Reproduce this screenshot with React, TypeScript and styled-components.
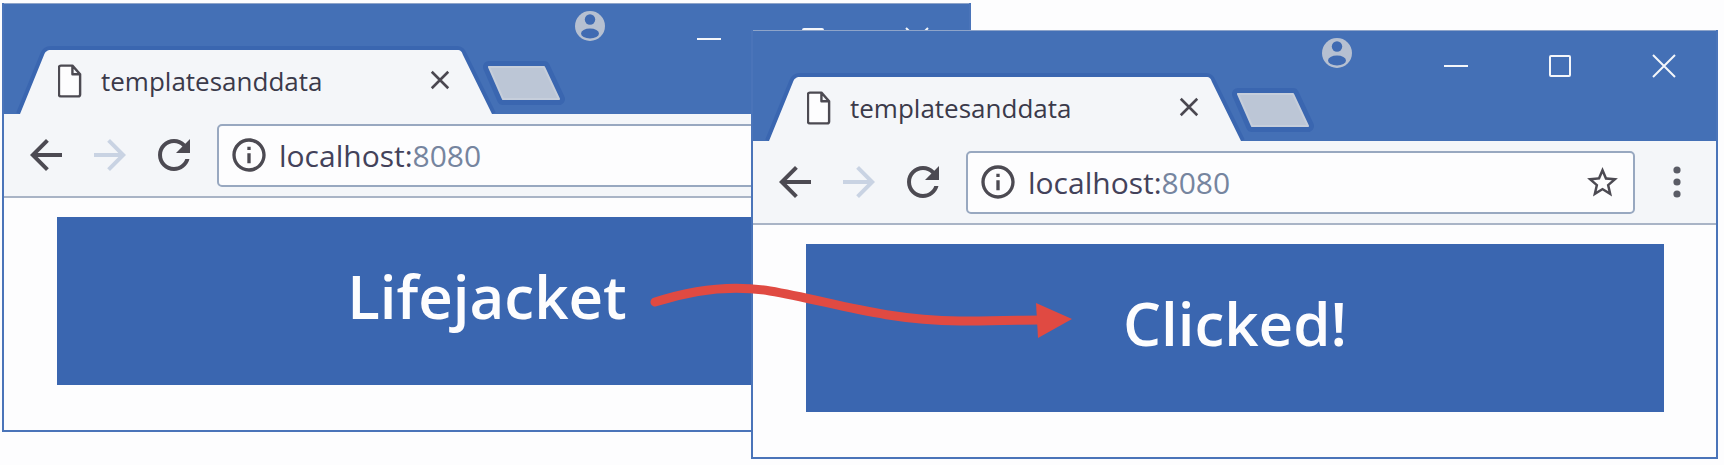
import { createGlobalStyle, styled } from "styled-components";

const GlobalStyle = createGlobalStyle`
  html, body {
    margin: 0;
    background: #fdfdfe;
  }
`;

// Free canvas: the two browser windows overlap like windows on a desktop
const Stage = styled.div`
  position: relative;
  width: 1724px;
  height: 465px;
  overflow: hidden;
  background: #fdfdfe;
  font-family: "Open Sans", "Liberation Sans", sans-serif;
`;

const BrowserWindow = styled.div<{ $left: number; $top: number; $width: number }>`
  position: absolute;
  left: ${(p) => p.$left}px;
  top: ${(p) => p.$top}px;
  width: ${(p) => p.$width}px;
  height: 429px;
  box-sizing: border-box;
  display: flex;
  flex-direction: column;
  background: #fdfdfe;
  border: 2px solid #4a74b9;
  border-top: 0;
`;

const TitleBar = styled.div`
  background: #4470b6;
  border-top: 1px solid #8ea4c9;
  box-sizing: border-box;
  height: 111px;
  display: flex;
  flex-direction: column;
  flex-shrink: 0;
`;

const CaptionRow = styled.div`
  height: 46px;
  display: flex;
  justify-content: flex-end;
  padding-right: 40px;
  gap: 80px;
  flex-shrink: 0;
`;

const AccountIcon = styled.svg`
  width: 32px;
  height: 32px;
  margin: 6px 11px 0 0;
`;

const CaptionButton = styled.svg`
  width: 24px;
  height: 24px;
  margin-top: 23px;
  color: #f4f6fa;
`;

const TabRow = styled.div`
  display: flex;
  align-items: flex-end;
  height: 64px;
  padding-left: 16px;
`;

const Tab = styled.div`
  position: relative;
  width: 472px;
  height: 64px;
  display: flex;
  align-items: center;
  padding-left: 38px;
  box-sizing: border-box;
  flex-shrink: 0;
`;

const TabShape = styled.svg`
  position: absolute;
  left: -10px;
  top: -10px;
  width: 492px;
  height: 74px;
`;

const TabFile = styled.svg`
  position: relative;
  width: 25px;
  height: 36px;
  margin-bottom: 2px;
  flex-shrink: 0;
`;

const TabTitle = styled.span`
  position: relative;
  margin-left: 18px;
  width: 328px;
  font-size: 26px;
  color: #3b3a4a;
  margin-bottom: 3px;
  flex-shrink: 0;
`;

const TabClose = styled.svg`
  position: relative;
  width: 22px;
  height: 22px;
  margin-bottom: 4px;
  flex-shrink: 0;
  color: #4a4750;
`;

const NewTab = styled.svg`
  width: 74px;
  height: 36px;
  margin: 0 0 13px -5px;
  flex-shrink: 0;
  overflow: visible;
`;

const Toolbar = styled.div`
  height: 84px;
  box-sizing: border-box;
  background: #f4f6f9;
  border-bottom: 2px solid #a9b4c6;
  display: flex;
  align-items: center;
  padding-left: 18px;
  flex-shrink: 0;
`;

const NavIcon = styled.svg<{ $faded?: boolean }>`
  width: 48px;
  height: 48px;
  margin-right: 16px;
  flex-shrink: 0;
  color: ${(p) => (p.$faded ? "#c9d3e3" : "#4c4a52")};
`;

const AddressBar = styled.div`
  width: 669px;
  height: 63px;
  margin-left: 3px;
  box-sizing: border-box;
  background: #fdfdfe;
  border: 2px solid #98a8c0;
  border-radius: 5px;
  display: flex;
  align-items: center;
  padding: 0 12px 0 10px;
  flex-shrink: 0;
`;

const InfoIcon = styled.svg`
  width: 40px;
  height: 40px;
  color: #4c4a52;
  flex-shrink: 0;
`;

const Url = styled.span`
  margin-left: 10px;
  font-size: 30px;
  color: #43425a;
  flex: 1;
`;

const UrlPort = styled.span`
  color: #76859f;
`;

const StarIcon = styled.svg`
  width: 37px;
  height: 37px;
  color: #4c4a52;
`;

const MenuIcon = styled.svg`
  width: 10px;
  height: 34px;
  margin-left: 37px;
  color: #5a5c66;
  flex-shrink: 0;
`;

const Content = styled.div`
  flex: 1;
  display: flex;
  padding: 19px 52px 45px 53px;
  min-height: 0;
`;

const BlueButton = styled.div`
  flex: 1;
  background: #3a66b0;
  color: #fdfdfe;
  display: flex;
  align-items: center;
  justify-content: center;
  font-size: 60px;
  font-weight: 600;
  padding-bottom: 10px;
  box-sizing: border-box;
`;

const ArrowOverlay = styled.svg`
  position: absolute;
  left: 0;
  top: 0;
  width: 1724px;
  height: 465px;
  pointer-events: none;
`;

const BACK = "M20 11H7.83l5.59-5.59L12 4l-8 8 8 8 1.41-1.41L7.83 13H20v-2z";
const FORWARD = "M12 4l-1.41 1.41L16.17 11H4v2h12.17l-5.58 5.59L12 20l8-8z";
const RELOAD =
  "M17.65 6.35C16.2 4.9 14.21 4 12 4c-4.42 0-7.99 3.58-7.99 8s3.57 8 7.99 8c3.73 0 6.84-2.55 7.73-6h-2.08c-.82 2.33-3.04 4-5.65 4-3.31 0-6-2.69-6-6s2.69-6 6-6c1.66 0 3.14.69 4.22 1.78L13 11h7V4l-2.35 2.35z";
const INFO =
  "M11 7h2v2h-2zm0 4h2v6h-2zm1-9C6.48 2 2 6.48 2 12s4.48 10 10 10 10-4.48 10-10S17.52 2 12 2zm0 18c-4.41 0-8-3.59-8-8s3.59-8 8-8 8 3.59 8 8-3.59 8-8 8z";
const STAR =
  "M22 9.24l-7.19-.62L12 2 9.19 8.63 2 9.24l5.46 4.73L5.82 21 12 17.27 18.18 21l-1.63-7.03L22 9.24zM12 15.4l-3.76 2.27 1-4.28-3.32-2.88 4.38-.38L12 6.1l1.71 4.04 4.38.38-3.32 2.88 1 4.28L12 15.4z";

type ChromeWindowProps = {
  left: number;
  top: number;
  width: number;
  label: string;
};

const ChromeWindow = ({ left, top, width, label }: ChromeWindowProps) => (
  <BrowserWindow $left={left} $top={top} $width={width}>
    <TitleBar>
      <CaptionRow>
        <AccountIcon viewBox="0 0 32 32">
          <circle cx="16" cy="16" r="15" fill="#b6c0d1" />
          <circle cx="16" cy="9.5" r="5.2" fill="#3f6ab2" />
          <ellipse cx="16" cy="23.5" rx="9" ry="5" fill="#3f6ab2" />
        </AccountIcon>
        <CaptionButton viewBox="0 0 24 24">
          <path d="M0 12h24" stroke="currentColor" strokeWidth="2" />
        </CaptionButton>
        <CaptionButton viewBox="0 0 24 24">
          <rect x="2" y="2" width="20" height="20" rx="1" fill="none" stroke="currentColor" strokeWidth="2" />
        </CaptionButton>
        <CaptionButton viewBox="0 0 24 24">
          <path d="M1 1l22 22M23 1L1 23" stroke="currentColor" strokeWidth="2" />
        </CaptionButton>
      </CaptionRow>
      <TabRow>
        <Tab>
          <TabShape viewBox="-10 -10 492 74">
            <path
              d="M0 64L24 5c1-3 3-5 7-5h406c4 0 5 2 6 5L472 64"
              fill="#f4f6f9"
              stroke="#3a66b0"
              strokeWidth="8"
              paintOrder="stroke"
            />
          </TabShape>
          <TabFile viewBox="0 0 26 36">
            <path
              d="M3 2h12l8 9v21a2 2 0 0 1-2 2H3a2 2 0 0 1-2-2V4a2 2 0 0 1 2-2zM15 2v9h8"
              fill="#fdfdfe"
              stroke="#4c4a52"
              strokeWidth="2.5"
              strokeLinejoin="round"
            />
          </TabFile>
          <TabTitle>templatesanddata</TabTitle>
          <TabClose viewBox="0 0 24 24">
            <path d="M3 3l18 18M21 3L3 21" stroke="currentColor" strokeWidth="2.8" />
          </TabClose>
        </Tab>
        <NewTab viewBox="0 0 74 36">
          <path
            d="M2 2h55l15 32H16z"
            fill="#bcc6d6"
            stroke="#3a66b0"
            strokeWidth="12"
            strokeLinejoin="round"
            paintOrder="stroke"
          />
          <path d="M2 2h55l15 32H16z" fill="none" stroke="#c6cedb" strokeWidth="2" strokeLinejoin="round" />
        </NewTab>
      </TabRow>
    </TitleBar>
    <Toolbar>
      <NavIcon viewBox="0 0 24 24">
        <path d={BACK} fill="currentColor" />
      </NavIcon>
      <NavIcon viewBox="0 0 24 24" $faded>
        <path d={FORWARD} fill="currentColor" />
      </NavIcon>
      <NavIcon viewBox="0 0 24 24">
        <path d={RELOAD} fill="currentColor" />
      </NavIcon>
      <AddressBar>
        <InfoIcon viewBox="0 0 24 24">
          <path d={INFO} fill="currentColor" />
        </InfoIcon>
        <Url>
          localhost:<UrlPort>8080</UrlPort>
        </Url>
        <StarIcon viewBox="0 0 24 24">
          <path d={STAR} fill="currentColor" />
        </StarIcon>
      </AddressBar>
      <MenuIcon viewBox="0 0 10 34">
        <circle cx="5" cy="5" r="3.6" fill="currentColor" />
        <circle cx="5" cy="17" r="3.6" fill="currentColor" />
        <circle cx="5" cy="29" r="3.6" fill="currentColor" />
      </MenuIcon>
    </Toolbar>
    <Content>
      <BlueButton>{label}</BlueButton>
    </Content>
  </BrowserWindow>
);

const App = () => (
  <Stage>
    <GlobalStyle />
    <ChromeWindow left={2} top={3} width={969} label="Lifejacket" />
    <ChromeWindow left={751} top={30} width={967} label="Clicked!" />
    <ArrowOverlay viewBox="0 0 1724 465">
      <path
        d="M655 302C695 289 735 285 770 291C830 301 880 320 960 321C990 321 1015 320 1040 320"
        fill="none"
        stroke="#e04a42"
        strokeWidth="9"
        strokeLinecap="round"
      />
      <path d="M1036 303L1072 319L1038 338z" fill="#e04a42" />
    </ArrowOverlay>
  </Stage>
);

export default App;
